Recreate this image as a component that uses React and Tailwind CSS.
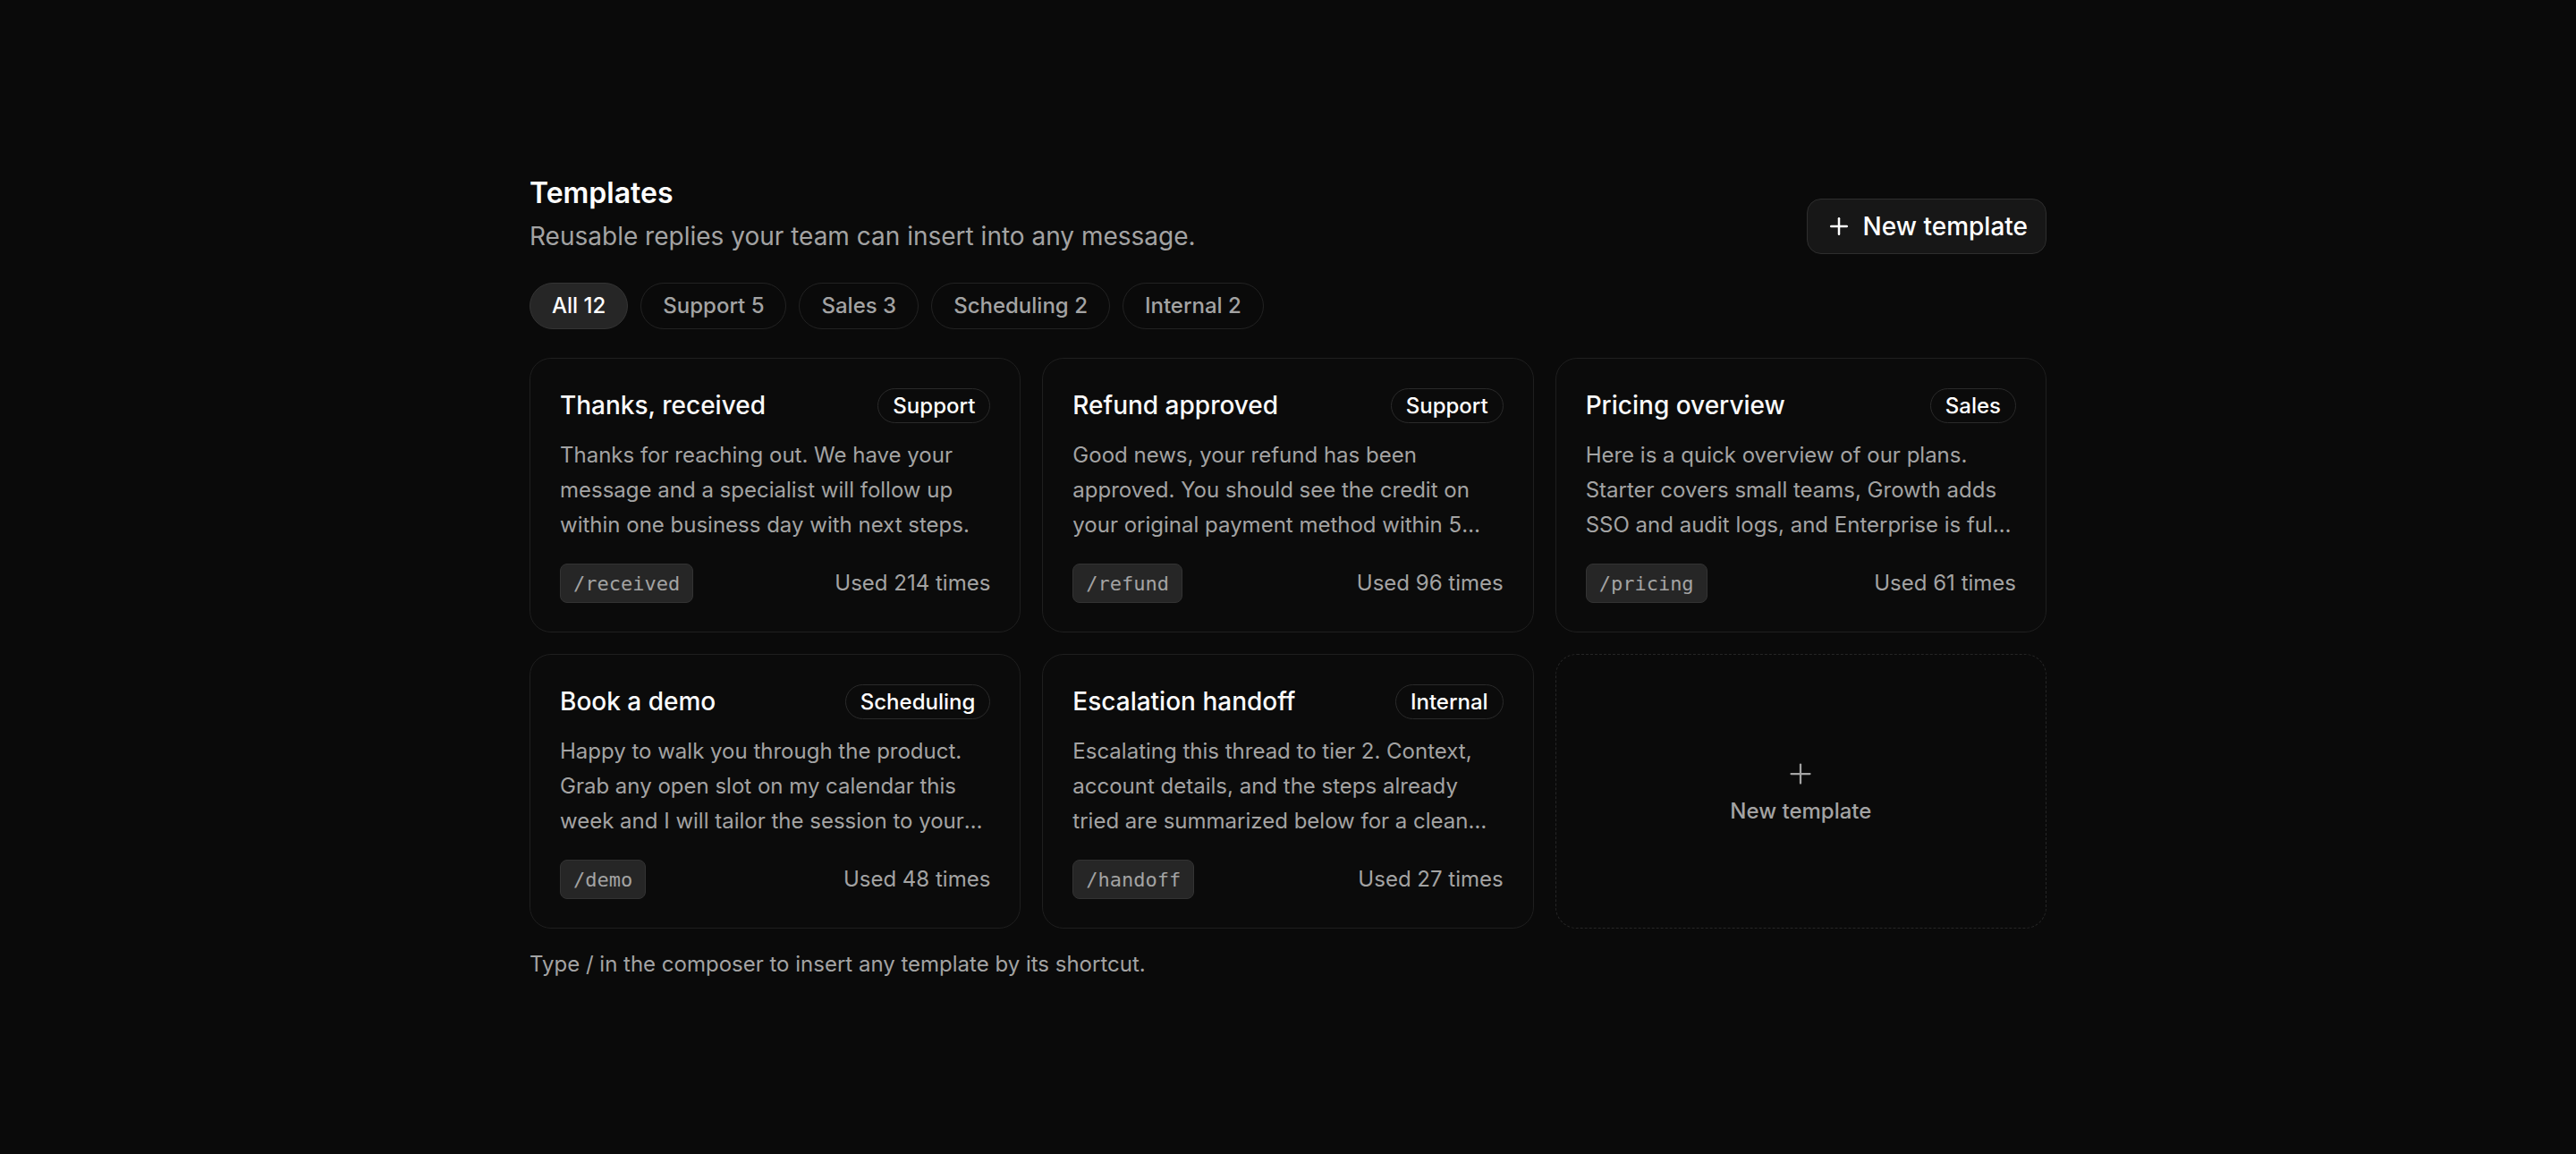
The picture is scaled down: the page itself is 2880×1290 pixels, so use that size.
import { Plus } from "lucide-react";

const filters = [
    { label: "All", count: 12, active: true },
    { label: "Support", count: 5 },
    { label: "Sales", count: 3 },
    { label: "Scheduling", count: 2 },
    { label: "Internal", count: 2 },
];

const templates = [
    {
        id: 1,
        title: "Thanks, received",
        tag: "Support",
        body: "Thanks for reaching out. We have your message and a specialist will follow up within one business day with next steps.",
        shortcut: "/received",
        used: 214,
    },
    {
        id: 2,
        title: "Refund approved",
        tag: "Support",
        body: "Good news, your refund has been approved. You should see the credit on your original payment method within 5 business days.",
        shortcut: "/refund",
        used: 96,
    },
    {
        id: 3,
        title: "Pricing overview",
        tag: "Sales",
        body: "Here is a quick overview of our plans. Starter covers small teams, Growth adds SSO and audit logs, and Enterprise is fully custom with dedicated support.",
        shortcut: "/pricing",
        used: 61,
    },
    {
        id: 4,
        title: "Book a demo",
        tag: "Scheduling",
        body: "Happy to walk you through the product. Grab any open slot on my calendar this week and I will tailor the session to your team and goals.",
        shortcut: "/demo",
        used: 48,
    },
    {
        id: 5,
        title: "Escalation handoff",
        tag: "Internal",
        body: "Escalating this thread to tier 2. Context, account details, and the steps already tried are summarized below for a clean handoff.",
        shortcut: "/handoff",
        used: 27,
    },
];

function TemplateCard({ t }) {
    return (
        <div className="rounded-3xl border border-[#1f1f1f] bg-[#0b0b0b] px-[33px] py-8">
            <div className="flex items-center justify-between gap-4">
                <h3 className="text-[28px] leading-10 font-medium text-[#fafafa] truncate">
                    {t.title}
                </h3>
                <span className="shrink-0 rounded-full border border-[#2a2a2a] px-4 text-[24px] leading-[37px] font-medium text-white">
                    {t.tag}
                </span>
            </div>
            <p className="mt-4 text-[24px] leading-[39px] text-[#a3a3a3] line-clamp-3">
                {t.body}
            </p>
            <div className="mt-6 flex items-center justify-between">
                <code className="h-[44px] flex items-center rounded-lg border border-[#333] bg-[#262626] px-[14px] font-['DejaVu_Sans_Mono',monospace] text-[22px] text-[#a3a3a3]">
                    {t.shortcut}
                </code>
                <span className="text-[24px] text-[#a3a3a3]">Used {t.used} times</span>
            </div>
        </div>
    );
}

export default function App() {
    return (
        <div className="min-h-screen bg-[#0a0a0a] flex items-center justify-center font-['Inter','Noto_Sans',sans-serif] antialiased">
            <div className="w-[1696px]">
                <div className="flex items-end justify-between">
                    <div>
                        <h1 className="text-[32px] leading-10 font-semibold text-white">Templates</h1>
                        <p className="mt-2 text-[28px] leading-10 text-[#a3a3a3]">
                            Reusable replies your team can insert into any message.
                        </p>
                    </div>
                    <button className="h-[62px] flex items-center gap-3 rounded-2xl border border-[#2e2e2e] bg-[#171717] px-5 text-[28px] font-medium text-white">
                        <Plus size={30} strokeWidth={2} />
                        New template
                    </button>
                </div>

                <div className="mt-8 flex gap-[14px]">
                    {filters.map((f) => (
                        <button
                            key={f.label}
                            className={
                                f.active
                                    ? "h-[52px] rounded-full border border-[#343434] bg-[#262626] px-6 text-[24px] font-medium text-white"
                                    : "h-[52px] rounded-full border border-[#222] bg-transparent px-6 text-[24px] font-medium text-[#a3a3a3]"
                            }
                        >
                            {f.label} {f.count}
                        </button>
                    ))}
                </div>

                <div className="mt-8 grid grid-cols-3 gap-6">
                    {templates.map((t) => (
                        <TemplateCard key={t.id} t={t} />
                    ))}
                    <button className="rounded-3xl border border-dashed border-[#262626] bg-[#0a0a0a] flex flex-col items-center justify-center gap-2 text-[#a3a3a3]">
                        <Plus size={36} strokeWidth={1.5} />
                        <span className="text-[24px] leading-8 font-medium">New template</span>
                    </button>
                </div>

                <p className="mt-6 text-[24px] leading-8 text-[#a3a3a3]">
                    Type / in the composer to insert any template by its shortcut.
                </p>
            </div>
        </div>
    );
}
